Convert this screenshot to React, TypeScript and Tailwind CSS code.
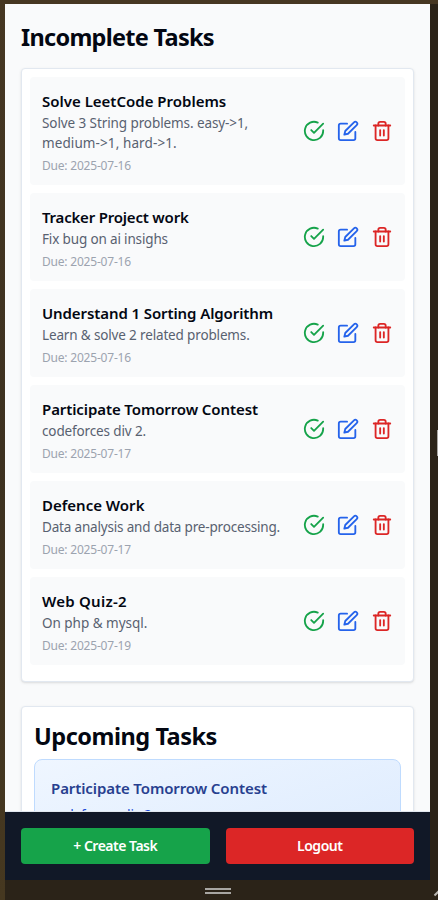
import { FiCheckCircle, FiEdit, FiTrash2 } from "react-icons/fi";

type Line = { text: string; cls: string };
type Task = { title: string; desc: Line[]; due: string; titleCls: string };

const tasks: Task[] = [
  {
    title: "Solve LeetCode Problems",
    desc: [
      { text: "Solve 3 String problems. easy->1,", cls: "tracking-[-0.09px]" },
      { text: "medium->1, hard->1.", cls: "tracking-[0.1px]" },
    ],
    due: "2025-07-16",
    titleCls: "tracking-[0px]",
  },
  { title: "Tracker Project work", desc: [{ text: "Fix bug on ai insighs", cls: "tracking-[-0.15px]" }], due: "2025-07-16", titleCls: "tracking-[-0.2px]" },
  { title: "Understand 1 Sorting Algorithm", desc: [{ text: "Learn & solve 2 related problems.", cls: "tracking-[-0.15px]" }], due: "2025-07-16", titleCls: "tracking-[-0.1px]" },
  { title: "Participate Tomorrow Contest", desc: [{ text: "codeforces div 2.", cls: "tracking-[-0.13px]" }], due: "2025-07-17", titleCls: "tracking-[-0.1px]" },
  { title: "Defence Work", desc: [{ text: "Data analysis and data pre-processing.", cls: "tracking-[-0.18px]" }], due: "2025-07-17", titleCls: "tracking-[0px]" },
  { title: "Web Quiz-2", desc: [{ text: "On php & mysql.", cls: "tracking-[-0.02px]" }], due: "2025-07-19", titleCls: "tracking-[0.25px]" },
];

function TaskRow({ task }: { task: Task }) {
  return (
    <li className="mb-2 flex items-center justify-between rounded bg-[#f9fafb] p-3">
      <div className="whitespace-nowrap">
        <h3 className={`text-[15px] leading-6 font-semibold text-[#030712] ${task.titleCls}`}>{task.title}</h3>
        {task.desc.map((line) => (
          <p key={line.text} className={`text-[13.5px] leading-5 text-[#586170] ${line.cls}`}>{line.text}</p>
        ))}
        <p className="mt-[5px] -mb-px text-[12px] leading-4 tracking-[-0.2px] text-[#9ca3af]">Due: {task.due}</p>
      </div>
      <div className="flex shrink-0 gap-3">
        <button className="text-[#16a34a]"><FiCheckCircle size={22} /></button>
        <button className="text-[#2563eb]"><FiEdit size={22} /></button>
        <button className="text-[#dc2626]"><FiTrash2 size={22} /></button>
      </div>
    </li>
  );
}

export default function App() {
  return (
    <div className="relative flex h-[900px] w-[438px] flex-col overflow-hidden bg-[#2b2318] font-['Noto_Sans','Open_Sans',sans-serif]">
      <div className="h-1 shrink-0 bg-[#463722]" />
      <div className="flex h-[896px]">
        <div className="w-[5px] shrink-0 bg-linear-to-b from-[#463722] via-[#3d3120] to-[#463820]" />
        <div className="flex w-[425px] flex-col">
          <main className="h-[807px] overflow-hidden bg-[#f9fafb] p-4">
            <h2 className="mb-4 h-8 pt-px text-[23.5px] leading-8 font-bold tracking-[-0.71px] whitespace-nowrap text-[#030712]">Incomplete Tasks</h2>
            <ul className="mb-6 rounded border border-[#e2e8f0] bg-white p-2 shadow-sm">
              {tasks.map((t) => <TaskRow key={t.title} task={t} />)}
            </ul>
            <section className="rounded border border-[#e2e8f0] bg-white p-3 shadow-sm">
              <h2 className="mb-2 h-8 pt-px text-[23.5px] leading-8 font-bold tracking-[-0.47px] whitespace-nowrap text-[#030712]">Upcoming Tasks</h2>
              <div className="h-[120px] rounded-lg border border-[#bfdbfe] bg-linear-to-br from-[#eff6ff] to-[#dbeafe] p-4">
                <h3 className="text-[15px] leading-6 font-semibold tracking-[-0.1px] whitespace-nowrap text-[#27408f]">Participate Tomorrow Contest</h3>
                <p className="mt-[5px] text-[13.5px] leading-5 tracking-[-0.13px] text-[#1d4ed8]">codeforces div 2.</p>
              </div>
            </section>
          </main>
          <footer className="grid h-[69px] shrink-0 grid-cols-2 gap-4 border-t border-[#e2e8f0] bg-[#111827] p-4 text-sm font-semibold text-white">
            <button className="rounded bg-[#16a34a] py-2 tracking-[-0.5px]">+ Create Task</button>
            <button className="rounded bg-[#dc2626] py-2 tracking-[-0.45px]">Logout</button>
          </footer>
          <div className="flex flex-col items-center gap-[2px] pt-2">
            <div className="h-[2px] w-[26px] bg-[#a8a6a2]" />
            <div className="h-[2px] w-[26px] bg-[#a8a6a2]" />
          </div>
        </div>
      </div>
      <div className="absolute top-[430px] right-0 h-[26px] w-px bg-[#a8a6a2]" />
      <svg className="absolute right-0 bottom-0" width="6" height="16" viewBox="0 0 6 16" fill="none" stroke="#b8b5b0" strokeWidth="2">
        <path d="M2.5 11.5 L8 6" />
      </svg>
    </div>
  );
}
